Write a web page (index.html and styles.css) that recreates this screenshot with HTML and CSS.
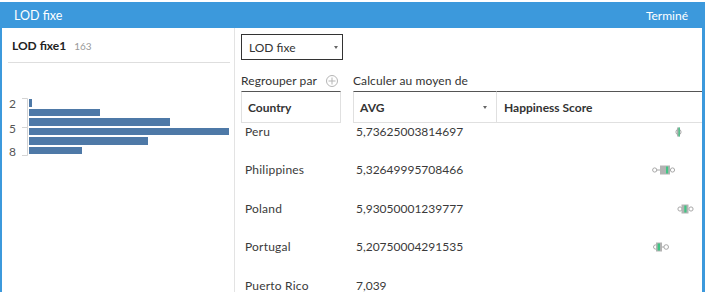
FILE: index.html
```html
<!DOCTYPE html>
<html lang="fr">
<head>
<meta charset="utf-8">
<link rel="stylesheet" href="styles.css">
</head>
<body>
<div class="window">
  <div class="titlebar">
    <span class="title">LOD fixe</span>
    <span class="done">Terminé</span>
  </div>
  <div class="content">
    <aside class="left">
      <div class="field-head"><span class="field-name">LOD fixe1</span><span class="count">163</span></div>
      <div class="divider"></div>
      <div class="hist">
        <div class="axis-labels">
          <span class="al a2">2</span>
          <span class="al a5">5</span>
          <span class="al a8">8</span>
        </div>
        <svg class="bracket" width="7" height="58" viewBox="0 0 7 58">
          <path d="M1 0.5H6.5V57.5H1M1 29.5H6.5" fill="none" stroke="#d4d4d4" stroke-width="1"/>
        </svg>
        <div class="bars">
          <div class="bar" style="width:3px"></div>
          <div class="bar" style="width:71px"></div>
          <div class="bar" style="width:141px"></div>
          <div class="bar" style="width:200px"></div>
          <div class="bar" style="width:119px"></div>
          <div class="bar" style="width:53px"></div>
        </div>
      </div>
    </aside>
    <main class="main">
      <div class="select"><span>LOD fixe</span><span class="caret"></span></div>
      <div class="grid">
        <div class="label">Regrouper par
          <svg class="plus" width="12" height="12" viewBox="0 0 12 12"><circle cx="6" cy="6" r="5.5" fill="none" stroke="#b5b5b5"/><path d="M6 2.5V9.5M2.5 6H9.5" stroke="#b5b5b5"/></svg>
        </div>
        <div class="label c2">Calculer au moyen de</div>
        <div class="label"></div>

        <div class="hcell h1">Country</div>
        <div class="hcell h2 c2">AVG<span class="caret small"></span></div>
        <div class="hcell h3">Happiness Score</div>

        <div class="cell name">Peru</div>
        <div class="cell val c2">5,73625003814697</div>
        <div class="cell box">
          <svg style="margin-left:178px" width="14" height="12" viewBox="0 0 14 12"><rect x="3" y="1.5" width="3" height="9" fill="#b3b3b3"/><circle cx="4.5" cy="6" r="2.6" fill="none" stroke="#a8a8a8"/><rect x="4.5" y="1.5" width="1.3" height="9" fill="#3fc584"/></svg>
        </div>

        <div class="cell name">Philippines</div>
        <div class="cell val c2">5,32649995708466</div>
        <div class="cell box">
          <svg style="margin-left:156px" width="24" height="12" viewBox="0 0 24 12"><path d="M4.5 6H8M18 6H19" stroke="#a8a8a8"/><circle cx="2.7" cy="6" r="2.1" fill="#fff" stroke="#a8a8a8"/><rect x="8" y="1.5" width="10" height="9" fill="#b3b3b3"/><rect x="14" y="2.5" width="2.2" height="7" fill="#3fc584"/><circle cx="20.5" cy="6" r="2.1" fill="#fff" stroke="#a8a8a8"/></svg>
        </div>

        <div class="cell name">Poland</div>
        <div class="cell val c2">5,93050001239777</div>
        <div class="cell box">
          <svg style="margin-left:181px" width="18" height="12" viewBox="0 0 18 12"><circle cx="3" cy="6" r="2.1" fill="#fff" stroke="#a8a8a8"/><rect x="4.5" y="1.5" width="7" height="9" fill="#b3b3b3"/><rect x="7.3" y="2.5" width="2.2" height="7" fill="#3fc584"/><circle cx="14" cy="6" r="2.1" fill="#fff" stroke="#a8a8a8"/></svg>
        </div>

        <div class="cell name">Portugal</div>
        <div class="cell val c2">5,20750004291535</div>
        <div class="cell box">
          <svg style="margin-left:157px" width="18" height="12" viewBox="0 0 18 12"><circle cx="2.6" cy="6" r="2.1" fill="#fff" stroke="#a8a8a8"/><rect x="3" y="1.5" width="6" height="9" fill="#b3b3b3"/><rect x="4.6" y="2.5" width="2.4" height="7" fill="#3fc584"/><path d="M9 6H11" stroke="#a8a8a8"/><circle cx="13.2" cy="6" r="2.3" fill="#fff" stroke="#a8a8a8"/></svg>
        </div>

        <div class="cell name">Puerto Rico</div>
        <div class="cell val c2">7,039</div>
        <div class="cell box"></div>
      </div>
    </main>
  </div>
</div>
</body>
</html>
```

FILE: styles.css
```css
* { box-sizing: border-box; }
html, body { margin: 0; padding: 0; background: #fff; }
body {
  width: 705px;
  height: 292px;
  overflow: hidden;
  font-family: Lato, "Open Sans", sans-serif;
  font-size: 12px;
  color: #333;
}
.window {
  margin-top: 2px;
  height: 290px;
  border-style: solid;
  border-color: #3c99dc;
  border-width: 0 3px 0 2px;
  display: flex;
  flex-direction: column;
  overflow: hidden;
}
.titlebar {
  height: 26px;
  flex: none;
  background: #3c99dc;
  color: #fff;
  display: flex;
  align-items: center;
  justify-content: space-between;
  padding: 0 14px 0 12px;
  font-size: 12px;
}
.title { font-size: 12.5px; }
.content {
  flex: 1;
  display: flex;
  min-height: 0;
}
.left {
  width: 233px;
  flex: none;
  border-right: 1px solid #e3e3e3;
  padding-top: 10px;
}
.field-head {
  display: flex;
  align-items: baseline;
  gap: 8px;
  padding-left: 10px;
  height: 16px;
}
.field-name { font-weight: 700; color: #222; }
.count { font-size: 10px; color: #999; }
.divider {
  margin: 8px 4px 0 6px;
  border-top: 1px solid #dedede;
}
.hist {
  display: flex;
  margin-top: 35px;
  padding-left: 7px;
}
.axis-labels {
  width: 12px;
  display: flex;
  flex-direction: column;
  color: #555;
  line-height: 12px;
}
.a2 { margin-top: 0; }
.a5 { margin-top: 13px; }
.a8 { margin-top: 11px; }
.bracket { display: block; }
.bars {
  display: flex;
  flex-direction: column;
  gap: 2px;
  margin-left: 1px;
  padding-top: 1px;
}
.bar {
  height: 7.5px;
  background: #4e79a7;
}
.main {
  flex: 1;
  padding: 6px 0 0 6px;
  min-width: 0;
}
.select {
  width: 102px;
  height: 26px;
  border: 1px solid #333;
  display: flex;
  align-items: center;
  justify-content: space-between;
  padding: 0 4px 0 7px;
  color: #333;
}
.caret {
  width: 0;
  height: 0;
  border-left: 2px solid transparent;
  border-right: 2px solid transparent;
  border-top: 3px solid #666;
}
.grid {
  display: grid;
  grid-template-columns: 100px 155px 1fr;
  margin-top: 13px;
}
.c2 { margin-left: 12px; }
.label {
  height: 18px;
  display: flex;
  align-items: flex-start;
  line-height: 16px;
  color: #333;
  letter-spacing: 0.1px;
}
.plus { margin-left: 9px; margin-top: 2px; }
.hcell {
  height: 32px;
  display: flex;
  align-items: center;
  padding-left: 6px;
  font-weight: 700;
  color: #333;
  border-top: 1px solid #555;
  border-bottom: 1px solid #e0e0e0;
  border-left: 1px solid #e0e0e0;
}
.h1 { border-right: 1px solid #e0e0e0; }
.h2 { justify-content: space-between; padding-right: 9px; padding-left: 6px; }
.h3 { padding-left: 7px; }
.cell {
  height: 38.4px;
  padding-top: 2px;
  line-height: 14px;
  color: #3a3a3a;
}
.name { padding-left: 4px; letter-spacing: 0.2px; }
.val { padding-left: 3px; }
.box svg { display: block; margin-top: 1px; }
```
